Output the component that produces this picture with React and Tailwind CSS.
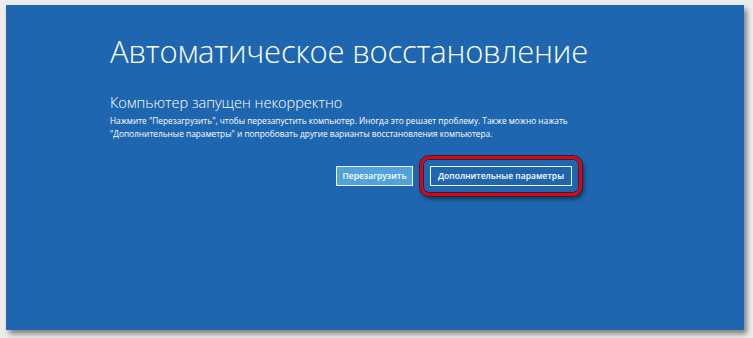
import React from 'react';

const App = () => {
  return (
    <div className="w-[753px] h-[338px] bg-[#ececec] overflow-hidden">
      <div className="ml-[6px] mt-[5px] w-[738px] h-[325px] bg-[#1f66b0] shadow-[3px_4px_5px_rgba(0,0,0,0.45)] pl-[104px] pt-[25px] text-white font-['Open_Sans',sans-serif]">
        <h1 className="text-[31px] font-light leading-[42px] tracking-[-0.2px]">Автоматическое восстановление</h1>
        <h2 className="mt-[21px] text-[14.5px] font-light leading-[20px]">Компьютер запущен некорректно</h2>
        <p className="mt-[1px] text-[8.3px] leading-[13px] whitespace-nowrap">
          Нажмите "Перезагрузить", чтобы перезапустить компьютер. Иногда это решает проблему. Также можно нажать
          <br />
          "Дополнительные параметры" и попробовать другие варианты восстановления компьютера.
        </p>
        <div className="mt-[26px] flex items-center gap-[7px] pl-[226px]">
          <div className="w-[77px] h-[20px] border border-white bg-[#4ea3dc] flex items-center justify-center text-[8.5px] font-semibold">
            Перезагрузить
          </div>
          <div className="p-[7px] rounded-[9px] border-[3px] border-[#e8000f] shadow-[0_0_0_1px_#1a2a40,inset_0_0_0_1px_#1a2a40,2px_3px_4px_rgba(0,0,0,0.5)] -my-[10px]">
            <div className="w-[142px] h-[20px] border border-white bg-[#1f66b0] flex items-center justify-center text-[8.5px] font-semibold">
              Дополнительные параметры
            </div>
          </div>
        </div>
      </div>
    </div>
  );
};

export default App;
